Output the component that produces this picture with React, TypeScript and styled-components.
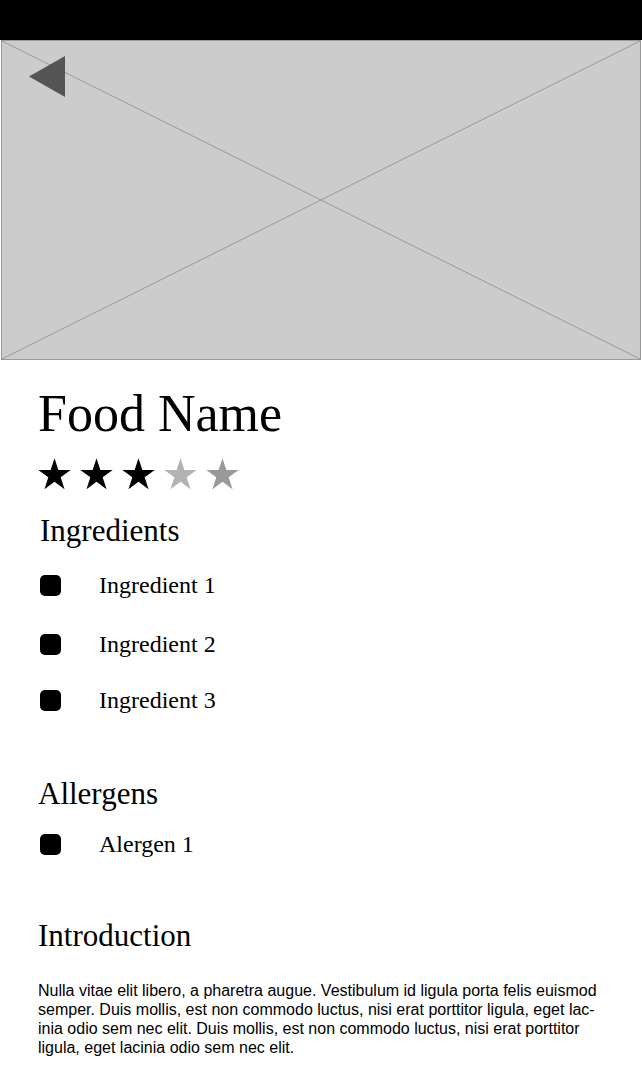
import React from 'react'
import styled, { createGlobalStyle } from 'styled-components'

const GlobalStyle = createGlobalStyle`
  html, body {
    margin: 0;
    padding: 0;
    background: #ffffff;
  }
`

const Page = styled.div`
  width: 642px;
  min-height: 1088px;
  background: #ffffff;
  font-family: 'Liberation Serif', 'DejaVu Serif', serif;
  color: #000000;
`

const TopBar = styled.div`
  height: 40px;
  background: #000000;
`

const Hero = styled.div`
  position: relative;
  height: 318px;
  margin: 0 1px 0 1px;
  background: #cccccc;
  border: 1px solid #999999;
`

const HeroLines = styled.svg`
  position: absolute;
  inset: 0;
  width: 100%;
  height: 100%;
`

const BackButton = styled.button`
  position: absolute;
  left: 27px;
  top: 15px;
  padding: 0;
  border: none;
  background: transparent;
  cursor: pointer;
  line-height: 0;
`

const Content = styled.div`
  padding: 26px 0 0 38px;
`

const Title = styled.h1`
  margin: 0;
  font-size: 52px;
  font-weight: 400;
  line-height: 56px;
`

const Stars = styled.div`
  display: flex;
  gap: 9px;
  margin-top: 16px;
`

const SectionTitle = styled.h2<{ $top: number; $indent?: number }>`
  margin: ${({ $top }) => $top}px 0 0 ${({ $indent }) => $indent ?? 0}px;
  font-size: 31px;
  font-weight: 400;
  line-height: 36px;
`

const List = styled.ul`
  list-style: none;
  margin: 0;
  padding: 0;
`

const Item = styled.li<{ $top: number }>`
  display: flex;
  align-items: center;
  gap: 38px;
  margin-top: ${({ $top }) => $top}px;
  font-size: 24px;
  line-height: 24px;
`

const Bullet = styled.span`
  width: 21px;
  height: 21px;
  border-radius: 5px;
  background: #000000;
  flex-shrink: 0;
  margin-left: 2px;
`

const Paragraph = styled.p`
  margin: 27px 0 0 0;
  width: 566px;
  font-family: 'Liberation Sans', Arial, sans-serif;
  font-size: 16px;
  line-height: 19px;
`

function Star({ color }: { color: string }) {
  return (
    <svg width="33" height="32" viewBox="0 0 24 23">
      <polygon
        points="12,0 14.8,8.6 23.8,8.6 16.5,13.9 19.3,22.6 12,17.2 4.7,22.6 7.5,13.9 0.2,8.6 9.2,8.6"
        fill={color}
      />
    </svg>
  )
}

const starColors = ['#000000', '#000000', '#000000', '#b3b3b3', '#999999']

export default function App() {
  return (
    <Page>
      <GlobalStyle />
      <TopBar />
      <Hero>
        <HeroLines viewBox="0 0 638 318" preserveAspectRatio="none">
          <line x1="0" y1="0" x2="638" y2="318" stroke="#999999" strokeWidth="1" />
          <line x1="638" y1="0" x2="0" y2="318" stroke="#999999" strokeWidth="1" />
        </HeroLines>
        <BackButton aria-label="Back">
          <svg width="36" height="41" viewBox="0 0 36 41">
            <polygon points="0,20.5 36,0 36,41" fill="#555555" />
          </svg>
        </BackButton>
      </Hero>
      <Content>
        <Title>Food Name</Title>
        <Stars>
          {starColors.map((c, i) => (
            <Star key={i} color={c} />
          ))}
        </Stars>
        <SectionTitle $top={23} $indent={2}>Ingredients</SectionTitle>
        <List>
          <Item $top={24}>
            <Bullet />
            Ingredient 1
          </Item>
          <Item $top={35}>
            <Bullet />
            Ingredient 2
          </Item>
          <Item $top={32}>
            <Bullet />
            Ingredient 3
          </Item>
        </List>
        <SectionTitle $top={64}>Allergens</SectionTitle>
        <List>
          <Item $top={20}>
            <Bullet />
            Alergen 1
          </Item>
        </List>
        <SectionTitle $top={62}>Introduction</SectionTitle>
        <Paragraph>
          Nulla vitae elit libero, a pharetra augue. Vestibulum id ligula porta felis euismod
          semper. Duis mollis, est non commodo luctus, nisi erat porttitor ligula, eget lac{'\u00AD'}inia
          odio sem nec elit. Duis mollis, est non commodo luctus, nisi erat porttitor ligula, eget
          lacinia odio sem nec elit.
        </Paragraph>
      </Content>
    </Page>
  )
}
